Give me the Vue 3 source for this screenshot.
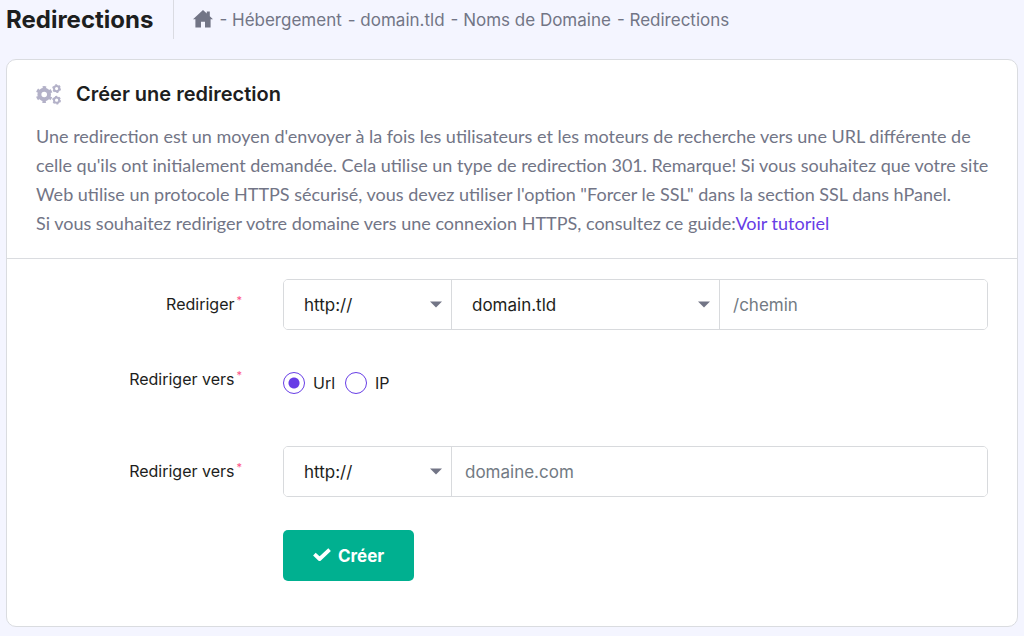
<template>
  <div class="page">
    <header class="page-header">
      <h1>Redirections</h1>
      <nav class="breadcrumb" aria-label="Fil d'Ariane">
        <a href="#" class="home" aria-label="Accueil">
          <svg width="20" height="20" viewBox="0 0 20 20">
            <path d="M10 0 L0 9.2 H2.4 V17.4 H8 V11.8 H12 V17.4 H17.6 V9.2 H20 L16.8 6.2 V1.6 H13.8 V3.5 Z" fill="#727586" />
          </svg>
        </a>
        <a v-for="lien in liens" :key="lien" href="#">- {{ lien }}</a>
      </nav>
    </header>

    <section class="card">
      <div class="card-head">
        <h2>
          <svg class="gears" width="26" height="22" viewBox="0 0 26 22">
            <g fill="none" stroke="#b3b1c8">
              <circle cx="8.2" cy="10.5" r="4.8" stroke-width="4" />
              <circle cx="8.2" cy="10.5" r="7.2" stroke-width="2.4" stroke-dasharray="3.4 4.14" stroke-dashoffset="1.7" transform="rotate(30 8.2 10.5)" />
              <circle cx="20.6" cy="4.6" r="2.6" stroke-width="2" />
              <circle cx="20.6" cy="4.6" r="3.7" stroke-width="1.4" stroke-dasharray="2 1.875" />
              <circle cx="20.6" cy="16.2" r="2.6" stroke-width="2" />
              <circle cx="20.6" cy="16.2" r="3.7" stroke-width="1.4" stroke-dasharray="2 1.875" />
            </g>
          </svg>
          Créer une redirection
        </h2>
        <p>
          Une redirection est un moyen d'envoyer à la fois les utilisateurs et les moteurs de recherche vers une URL différente de
          celle qu'ils ont initialement demandée. Cela utilise un type de redirection 301. Remarque! Si vous souhaitez que votre site
          Web utilise un protocole HTTPS sécurisé, vous devez utiliser l'option "Forcer le SSL" dans la section SSL dans hPanel.<br />
          Si vous souhaitez rediriger votre domaine vers une connexion HTTPS, consultez ce guide:<a href="#">Voir tutoriel</a>
        </p>
      </div>

      <form class="card-body" @submit.prevent>
        <div class="row">
          <label class="row-label" for="domaine">Rediriger<span class="star">*</span></label>
          <div class="group group-source">
            <select v-model="form.protocole" aria-label="Protocole">
              <option>http://</option>
              <option>https://</option>
            </select>
            <select id="domaine" v-model="form.domaine">
              <option>domain.tld</option>
            </select>
            <input v-model="form.chemin" type="text" placeholder="/chemin" aria-label="Chemin" />
          </div>
        </div>

        <div class="row row-radios" role="radiogroup" aria-labelledby="type-label">
          <span id="type-label" class="row-label">Rediriger vers<span class="star">*</span></span>
          <div class="radios">
            <label><input v-model="form.type" type="radio" name="type" value="url" />Url</label>
            <label><input v-model="form.type" type="radio" name="type" value="ip" />IP</label>
          </div>
        </div>

        <div class="row">
          <label class="row-label" for="cible">Rediriger vers<span class="star">*</span></label>
          <div class="group">
            <select v-model="form.protocoleCible" aria-label="Protocole cible">
              <option>http://</option>
              <option>https://</option>
            </select>
            <input id="cible" v-model="form.cible" type="text" placeholder="domaine.com" />
          </div>
        </div>

        <div class="row">
          <button type="submit" class="btn-create">
            <svg width="18" height="16" viewBox="0 0 18 16" fill="none" stroke="#fff" stroke-width="3.8" stroke-linejoin="round">
              <path d="M1.4 6.2 L6.6 11 L16.6 1.6" />
            </svg>
            Créer
          </button>
        </div>
      </form>
    </section>
  </div>
</template>

<script setup>
import { reactive } from "vue";

const liens = ["Hébergement", "domain.tld", "Noms de Domaine", "Redirections"];

const form = reactive({
  protocole: "http://",
  domaine: "domain.tld",
  chemin: "",
  type: "url",
  protocoleCible: "http://",
  cible: ""
});
</script>

<style>
body {
  background: #f4f5ff;
}
</style>

<style scoped>
.page {
  padding: 0 6px 8px;
  font-family: Inter, "Open Sans", sans-serif;
  font-size: 16px;
  color: #1d1e20;
}

.page * {
  box-sizing: border-box;
}

.page-header {
  display: flex;
  height: 39px;
  margin-bottom: 20px;
}

h1 {
  margin: 0;
  padding-right: 20px;
  border-right: 1px solid #dadbe2;
  font-size: 24px;
  line-height: 39px;
  font-weight: 700;
}

.breadcrumb {
  display: flex;
  align-items: center;
  gap: 6px;
  padding-left: 19px;
  font-size: 17px;
}

.breadcrumb a {
  color: #727586;
  text-decoration: none;
}

.breadcrumb svg {
  display: block;
}

.card {
  background: #fff;
  border: 1px solid #dadce0;
  border-radius: 10px;
}

.card-head {
  padding: 20px 20px 20px 29px;
  border-bottom: 1px solid #dadce0;
}

h2 {
  display: flex;
  align-items: center;
  gap: 14px;
  margin: 0 0 13px;
  font-size: 20px;
  line-height: 29px;
  font-weight: 600;
}

p {
  margin: 0;
  font-family: Lato, sans-serif;
  font-size: 18px;
  line-height: 29px;
  color: #727586;
}

p a {
  color: #673de6;
  text-decoration: none;
}

.card-body {
  display: flex;
  flex-direction: column;
  gap: 33px;
  padding: 20px 29px 45px;
}

.row {
  display: grid;
  grid-template-columns: 206px 1fr;
  column-gap: 41px;
}

.row-label {
  display: flex;
  justify-content: flex-end;
  gap: 2px;
  line-height: 50px;
}

.star {
  font-size: 11px;
  line-height: 42px;
  color: #fc5185;
}

.row-radios {
  min-height: 50px;
}

.row-radios .row-label {
  line-height: 32px;
}

.row-radios .star {
  line-height: 24px;
}

.group {
  display: grid;
  grid-template-columns: 167px 1fr;
  height: 51px;
  border: 1px solid #d8dadd;
  border-radius: 5px;
  overflow: hidden;
}

.group-source {
  grid-template-columns: 167px 1fr 1fr;
}

.group select,
.group input {
  min-width: 0;
  border: 0;
  border-radius: 0;
  background-color: #fff;
  font: inherit;
  font-size: 17px;
  color: #1d1e20;
}

.group select {
  appearance: none;
  padding: 0 20px;
  background-image: url("data:image/svg+xml,%3Csvg xmlns='http://www.w3.org/2000/svg' width='12' height='7'%3E%3Cpath d='M0 0.5h12L6 6.5z' fill='%23727586'/%3E%3C/svg%3E");
  background-repeat: no-repeat;
  background-position: right 9px center;
}

.group select + select,
.group select + input {
  border-left: 1px solid #d8dadd;
}

.group input {
  padding: 0 13px;
}

.group input::placeholder {
  color: #727a83;
  opacity: 1;
}

.radios {
  display: flex;
  align-items: flex-start;
  gap: 10px;
  padding-top: 9px;
}

.radios label {
  display: flex;
  align-items: center;
  gap: 8px;
  line-height: 22px;
}

.radios input {
  appearance: none;
  width: 22px;
  height: 22px;
  margin: 0;
  border: 1px solid #673de6;
  border-radius: 50%;
}

.radios input:checked {
  background: radial-gradient(circle, #673de6 5px, #fff 6px);
}

.btn-create {
  grid-column: 2;
  justify-self: start;
  display: flex;
  align-items: center;
  gap: 7px;
  height: 51px;
  padding: 0 30px;
  border: 0;
  border-radius: 5px;
  background: #00b090;
  color: #fff;
  font: inherit;
  font-size: 17px;
  font-weight: 700;
  cursor: pointer;
}
</style>
